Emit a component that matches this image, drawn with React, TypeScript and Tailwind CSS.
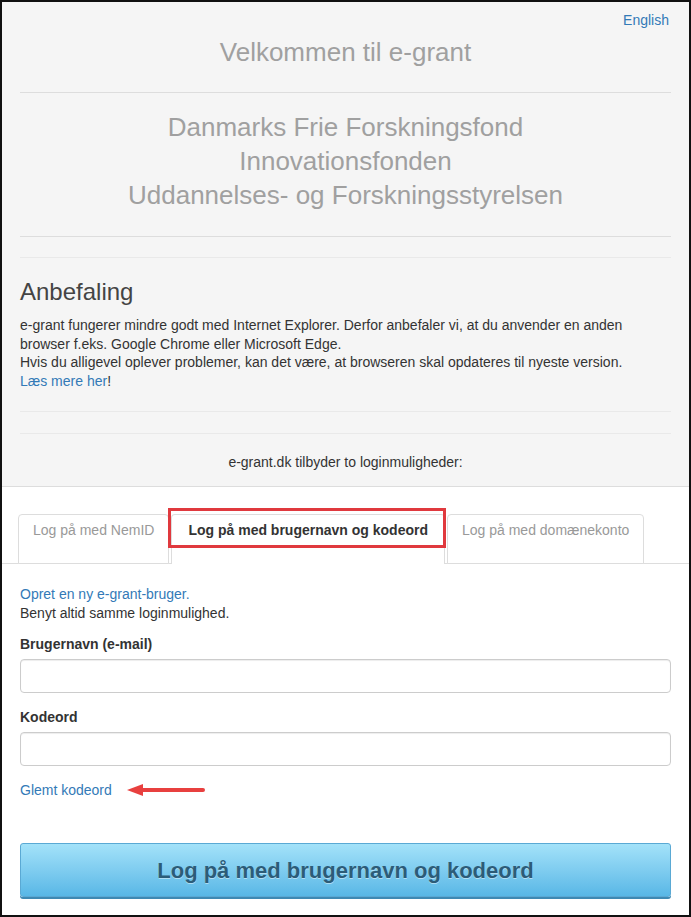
import React from "react";

const tabs = [
  { id: "nemid", label: "Log på med NemID" },
  { id: "user", label: "Log på med brugernavn og kodeord" },
  { id: "domain", label: "Log på med domænekonto" },
];

function ArrowLeft() {
  return (
    <svg width="80" height="14" viewBox="0 0 80 14" className="ml-[14px] shrink-0">
      <path d="M16 7 H77" stroke="#e8403f" strokeWidth="4" strokeLinecap="round" />
      <path d="M1 7 L17 1 L17 13 Z" fill="#e8403f" />
    </svg>
  );
}

export default function App() {
  const active = "user";

  return (
    <div className="h-[917px] w-[691px] overflow-hidden border-2 border-[#111] bg-white font-['Liberation_Sans',Arial,sans-serif] text-[14px] text-[#333]">
      <section className="border-b border-[#dddddd] bg-[#f5f5f5] px-[18px] pb-[14px]">
        <div className="pr-[2px] pt-[8px] text-right leading-[20px]">
          <a className="text-[#337ab7]">English</a>
        </div>
        <h1 className="mt-[7px] text-center text-[26px] leading-[30px] text-[#a0a0a0]">
          Velkommen til e-grant
        </h1>
        <hr className="mt-[25px] border-t border-[#dddddd]" />
        <div className="mt-[17px] text-center text-[26px] leading-[34px] text-[#a0a0a0]">
          <div>Danmarks Frie Forskningsfond</div>
          <div>Innovationsfonden</div>
          <div>Uddannelses- og Forskningsstyrelsen</div>
        </div>
        <hr className="mt-[24px] border-t border-[#dddddd]" />
        <hr className="mt-[20px] border-t border-[#e9e9e9]" />
        <h2 className="mt-[19px] text-[24px] leading-[30px] text-[#444]">Anbefaling</h2>
        <p className="mt-[9px] leading-[18.5px]">
          e-grant fungerer mindre godt med Internet Explorer. Derfor anbefaler vi, at du anvender en anden
          browser f.eks. Google Chrome eller Microsoft Edge.
          <br />
          Hvis du alligevel oplever problemer, kan det være, at browseren skal opdateres til nyeste version.
          <br />
          <a className="text-[#337ab7]">Læs mere her</a>!
        </p>
        <hr className="mt-[21px] border-t border-[#e9e9e9]" />
        <hr className="mt-[21px] border-t border-[#e9e9e9]" />
        <p className="mt-[18px] text-center leading-[20px]">e-grant.dk tilbyder to loginmuligheder:</p>
      </section>

      <section>
        <ul className="mt-[27px] flex items-end border-b border-[#dddddd] pl-[16px]">
          {tabs.map((t) => {
            const isActive = t.id === active;
            return (
              <li
                key={t.id}
                className={
                  isActive
                    ? "relative -mb-px mr-[2px] h-[50px] rounded-t-[4px] border border-b-0 border-[#dddddd] bg-white px-[16px] pt-[5px] font-bold leading-[20px] text-[#333]"
                    : "-mb-px mr-[2px] h-[50px] rounded-t-[4px] border border-[#dddddd] bg-white px-[14px] pt-[5px] leading-[20px] text-[#999]"
                }
              >
                {t.label}
                {isActive ? (
                  <span className="absolute -left-[4px] -right-[2px] -top-[7px] h-[40px] border-[3px] border-[#e0393e]" />
                ) : null}
              </li>
            );
          })}
        </ul>

        <div className="px-[18px] pb-[16px]">
          <a className="mt-[21px] block leading-[19px] text-[#337ab7]">Opret en ny e-grant-bruger.</a>
          <div className="leading-[19px]">Benyt altid samme loginmulighed.</div>

          <label className="mt-[11px] block font-bold leading-[20px]">Brugernavn (e-mail)</label>
          <input className="mt-[5px] block h-[34px] w-full rounded-[4px] border border-[#cccccc] bg-white px-3 shadow-[inset_0_1px_1px_rgba(0,0,0,0.075)]" />

          <label className="mt-[14px] block font-bold leading-[20px]">Kodeord</label>
          <input
            type="password"
            className="mt-[5px] block h-[34px] w-full rounded-[4px] border border-[#cccccc] bg-white px-3 shadow-[inset_0_1px_1px_rgba(0,0,0,0.075)]"
          />

          <div className="mt-[14px] flex items-center leading-[20px]">
            <a className="text-[#337ab7]">Glemt kodeord</a>
            <ArrowLeft />
          </div>

          <button className="mt-[43px] block h-[54px] w-full rounded-[3px] border border-[#5aa9d4] bg-gradient-to-b from-[#a3e2f9] to-[#58b7e6] text-[22px] font-bold text-[#2c5c78] shadow-[0_2px_0_#3e89b3] [text-shadow:0_1px_0_rgba(255,255,255,0.45)]">
            Log på med brugernavn og kodeord
          </button>
        </div>
      </section>
    </div>
  );
}
